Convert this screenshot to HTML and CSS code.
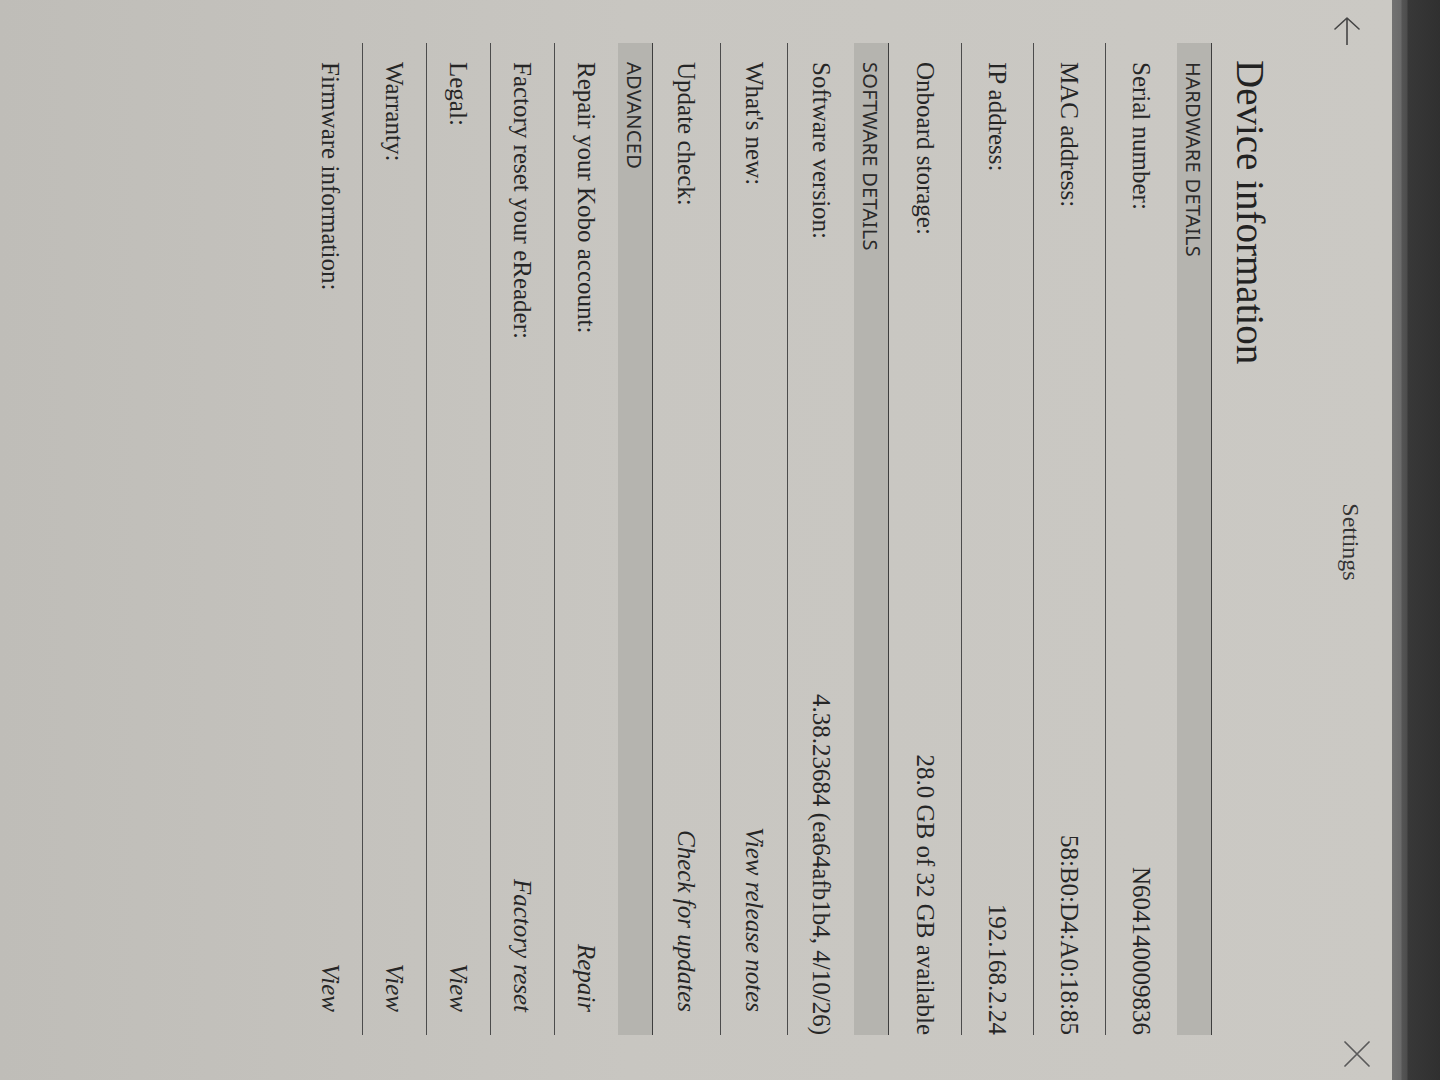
FILE: index.html
```html
<!DOCTYPE html>
<html lang="en">
<head>
<meta charset="utf-8">
<title>Device information</title>
<link rel="stylesheet" href="styles.css">
</head>
<body>
<div class="device">
  <div class="stage">
    <div class="screen">
      <header class="topbar">
        <span class="icon back">
          <svg width="28" height="26" viewBox="0 0 28 26"><path d="M12 1 L1 13 L12 25 M1 13 H28" fill="none" stroke="#454545" stroke-width="1.6" stroke-linecap="round" stroke-linejoin="round"/></svg>
        </span>
        <div class="topbar-title">Settings</div>
        <span class="icon close">
          <svg width="26" height="26" viewBox="0 0 26 26"><path d="M1 1 L25 25 M25 1 L1 25" fill="none" stroke="#5a5a5a" stroke-width="1.7" stroke-linecap="round"/></svg>
        </span>
      </header>
      <main class="content">
        <h1 class="page-title">Device information</h1>

        <section class="section section--hw">
          <div class="section-head">HARDWARE DETAILS</div>
          <div class="row"><span class="label">Serial number:</span><span class="value">N604140009836</span></div>
          <div class="row"><span class="label">MAC address:</span><span class="value">58:B0:D4:A0:18:85</span></div>
          <div class="row"><span class="label">IP address:</span><span class="value">192.168.2.24</span></div>
          <div class="row"><span class="label">Onboard storage:</span><span class="value">28.0 GB of 32 GB available</span></div>
        </section>

        <section class="section section--sw">
          <div class="section-head">SOFTWARE DETAILS</div>
          <div class="row"><span class="label">Software version:</span><span class="value">4.38.23684 (ea64afb1b4, 4/10/26)</span></div>
          <div class="row"><span class="label">What's new:</span><span class="value value--link">View release notes</span></div>
          <div class="row"><span class="label">Update check:</span><span class="value value--link">Check for updates</span></div>
        </section>

        <section class="section section--adv">
          <div class="section-head">ADVANCED</div>
          <div class="row"><span class="label">Repair your Kobo account:</span><span class="value value--link">Repair</span></div>
          <div class="row"><span class="label">Factory reset your eReader:</span><span class="value value--link">Factory reset</span></div>
          <div class="row"><span class="label">Legal:</span><span class="value value--link">View</span></div>
          <div class="row"><span class="label">Warranty:</span><span class="value value--link">View</span></div>
          <div class="row"><span class="label">Firmware information:</span><span class="value value--link">View</span></div>
        </section>
      </main>
    </div>
  </div>
  <div class="bezel"></div>
</div>
</body>
</html>
```

FILE: styles.css
```css
html, body {
  margin: 0;
  padding: 0;
}

body {
  width: 1440px;
  height: 1080px;
  overflow: hidden;
  background: #343434;
}

.device {
  display: flex;
  width: 1440px;
  height: 1080px;
}

.stage {
  flex: none;
  width: 1392px;
  height: 1080px;
  overflow: hidden;
}

.screen {
  width: 1080px;
  height: 1392px;
  box-sizing: border-box;
  transform-origin: 0 0;
  transform: translateX(1392px) rotate(90deg);
  background: linear-gradient(to bottom, #cbc9c4 0%, #c8c6c1 55%, #bfbdb8 100%);
  font-family: "Liberation Serif", "Times New Roman", serif;
  color: #262626;
}

.bezel {
  flex: 1;
  background: linear-gradient(to right, #727272 0px, #6a6a6a 9px, #555555 10px, #4d4d4d 15px, #383838 16px, #303030 100%);
}

/* top bar */
.topbar {
  height: 80px;
  box-sizing: border-box;
  display: grid;
  grid-template-columns: 1fr auto 1fr;
  align-items: center;
  padding: 0 13px 0 17px;
}

.icon {
  display: flex;
}

.icon.back {
  justify-self: start;
  margin-top: 10px;
}

.icon.close {
  justify-self: end;
  margin-bottom: 10px;
}

.topbar-title {
  font-size: 24px;
  color: #333333;
  margin-top: 3px;
}

/* content */
.content {
  padding: 0 45px 0 43px;
}

.page-title {
  margin: 0;
  height: 100px;
  box-sizing: border-box;
  display: flex;
  align-items: flex-end;
  padding: 0 0 19px 17px;
  font-size: 39px;
  font-weight: normal;
  line-height: 1;
  color: #222222;
}

.section-head {
  height: 35px;
  box-sizing: border-box;
  border-top: 1px solid #3e3e3e;
  background: #b5b4af;
  display: flex;
  align-items: center;
  padding-left: 19px;
  font-family: "Noto Sans", "Open Sans", sans-serif;
  font-size: 20px;
  letter-spacing: 0.3px;
  color: #2a2a2a;
}

.row {
  display: flex;
  align-items: center;
  justify-content: space-between;
  box-sizing: border-box;
  border-bottom: 1px solid #4c4c4c;
  padding-left: 19px;
  font-size: 25px;
}

.row:last-child {
  border-bottom: none;
}

.section--hw .row { height: 72px; }
.section--sw .row { height: 67px; }
.section--adv .row { height: 64px; }

.value--link {
  font-style: italic;
  padding-right: 23px;
}
```
